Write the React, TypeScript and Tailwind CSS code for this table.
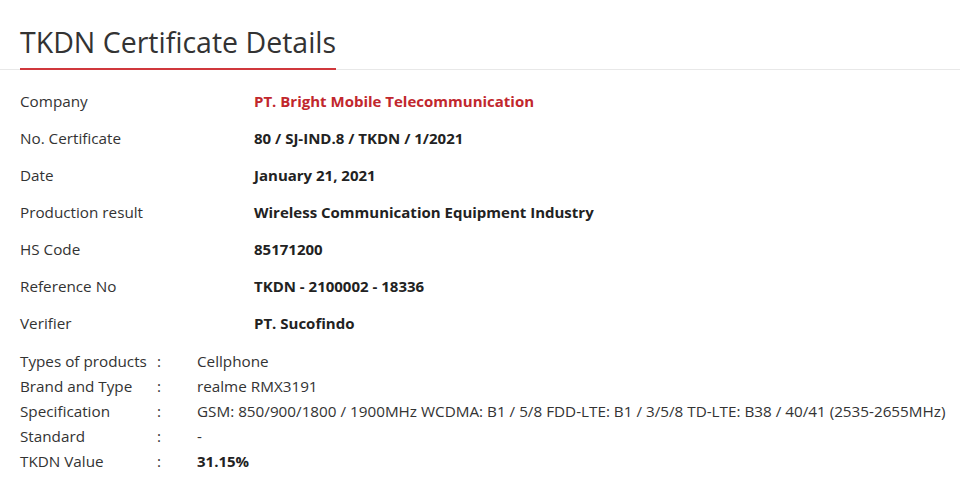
export default function App() {
  const rows = [
    { label: 'Company', value: 'PT. Bright Mobile Telecommunication', red: true },
    { label: 'No. Certificate', value: '80 / SJ-IND.8 / TKDN / 1/2021' },
    { label: 'Date', value: 'January 21, 2021' },
    { label: 'Production result', value: 'Wireless Communication Equipment Industry' },
    { label: 'HS Code', value: '85171200' },
    { label: 'Reference No', value: 'TKDN - 2100002 - 18336' },
    { label: 'Verifier', value: 'PT. Sucofindo' },
  ];

  const specs = [
    { label: 'Types of products', value: 'Cellphone' },
    { label: 'Brand and Type', value: 'realme RMX3191' },
    {
      label: 'Specification',
      value: 'GSM: 850/900/1800 / 1900MHz WCDMA: B1 / 5/8 FDD-LTE: B1 / 3/5/8 TD-LTE: B38 / 40/41 (2535-2655MHz)',
    },
    { label: 'Standard', value: '-' },
    { label: 'TKDN Value', value: '31.15%', bold: true },
  ];

  return (
    <div className="w-[960px] h-[497px] bg-white text-[#333] font-['Open_Sans',sans-serif] overflow-hidden">
      <div className="pt-[23px] border-b border-[#e8e8e8]">
        <h1 className="pl-[20px] text-[28.5px] leading-[39px] font-normal text-[#333] whitespace-nowrap">
          <span className="inline-block pb-[6px] border-b-2 border-[#d0383c] -mb-px">
            TKDN Certificate Details
          </span>
        </h1>
      </div>

      <div className="pl-[20px] pt-[13px] flex flex-col">
        {rows.map((r) => (
          <div key={r.label} className="flex h-[37px] items-center text-[15.25px]">
            <div className="w-[234px]">{r.label}</div>
            <div className={r.red ? 'font-bold text-[15px] text-[#c1272d]' : 'font-bold text-[15px] text-[#222]'}>
              {r.value}
            </div>
          </div>
        ))}
      </div>

      <div className="pl-[20px] pt-[7px] flex flex-col">
        {specs.map((s) => (
          <div key={s.label} className="flex h-[25px] items-center text-[15.25px]">
            <div className="w-[137px]">{s.label}</div>
            <div className="w-[40px]">:</div>
            <div className={s.bold ? 'font-bold text-[15px] text-[#222]' : ''}>{s.value}</div>
          </div>
        ))}
      </div>
    </div>
  );
}
